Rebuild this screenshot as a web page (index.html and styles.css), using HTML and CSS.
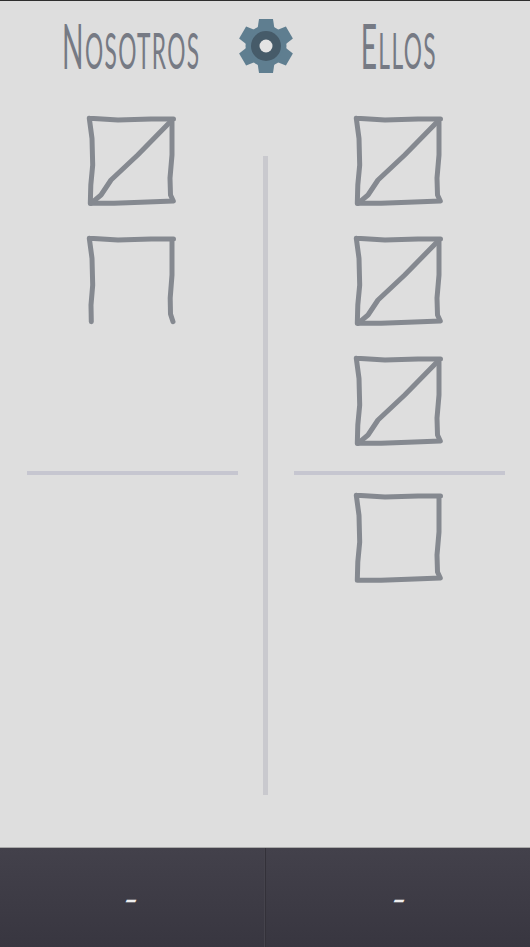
FILE: index.html
```html
<!DOCTYPE html>
<html>
	<head>
		<meta charset="UTF-8">
		<title>Truco</title>
		<link rel="stylesheet" href="styles.css">
	</head>
	<body>
		<svg class="defs" width="0" height="0">
			<symbol id="box" viewBox="0 0 92 92">
				<path d="M3.300 3.300L12 3.800 32 5 65 4 87.500 4M86 4L86 40 84 63 84.500 80 87.300 86 55 87.300 28 88.300 4.300 88.300M3.300 3.300L6 23.300 6.700 50 4.800 70 4.300 88.300"/>
			</symbol>
			<symbol id="open" viewBox="0 0 92 92">
				<path d="M3.300 3.300L12 3.800 32 5 65 4 87.500 4M86 4L86 40 84.200 63 84.500 79 87 86.700M3.300 3.300L6 23.300 6.700 50 5 70 5.300 86.700"/>
			</symbol>
			<symbol id="slash" viewBox="0 0 92 92">
				<path d="M86 5L51.700 40 25 65 15 80 5 88.300"/>
			</symbol>
		</svg>

		<header class="top">
			<div class="side"><h1 class="name">Nosotros</h1></div>
			<div class="mid">
				<svg class="gear" viewBox="0 0 54 54">
					<g class="teeth">
						<circle cx="27" cy="27" r="20.500"/>
						<polygon points="20,0 34,0 35.500,10 18.500,10"/>
						<polygon points="20,0 34,0 35.500,10 18.500,10" transform="rotate(60 27 27)"/>
						<polygon points="20,0 34,0 35.500,10 18.500,10" transform="rotate(120 27 27)"/>
						<polygon points="20,0 34,0 35.500,10 18.500,10" transform="rotate(180 27 27)"/>
						<polygon points="20,0 34,0 35.500,10 18.500,10" transform="rotate(240 27 27)"/>
						<polygon points="20,0 34,0 35.500,10 18.500,10" transform="rotate(300 27 27)"/>
					</g>
					<circle class="ring" cx="27" cy="27" r="15"/>
					<circle class="hole" cx="27" cy="27" r="6.500"/>
				</svg>
			</div>
			<div class="side side-right"><h1 class="name">Ellos</h1></div>
		</header>

		<main class="board">
			<section class="side">
				<div class="malas">
					<svg class="tally" viewBox="0 0 92 92"><use href="#box"/><use href="#slash"/></svg>
					<svg class="tally" viewBox="0 0 92 92"><use href="#open"/></svg>
				</div>
				<hr class="line">
				<div class="buenas"></div>
			</section>
			<div class="mid"><div class="rule"></div></div>
			<section class="side side-right">
				<div class="malas">
					<svg class="tally" viewBox="0 0 92 92"><use href="#box"/><use href="#slash"/></svg>
					<svg class="tally" viewBox="0 0 92 92"><use href="#box"/><use href="#slash"/></svg>
					<svg class="tally" viewBox="0 0 92 92"><use href="#box"/><use href="#slash"/></svg>
				</div>
				<hr class="line">
				<div class="buenas">
					<svg class="tally" viewBox="0 0 92 92"><use href="#box"/></svg>
				</div>
			</section>
		</main>

		<footer class="bar">
			<button class="minus"><span class="dash">-</span></button>
			<button class="minus"><span class="dash">-</span></button>
		</footer>
	</body>
</html>
```

FILE: styles.css
```css
html,body{
	height: 100%;
	width: 100%;
}
*{
	margin: 0;
	padding: 0;
	box-sizing: border-box;
}
body{
	display: flex;
	flex-direction: column;
	background: #dedede;
	border-top: 1px solid #2e2e2e;
	overflow: hidden;
	font-family: "Lato", "Liberation Sans", sans-serif;
}
.defs{
	position: absolute;
}
.top{
	display: flex;
	height: 114px;
}
.board{
	display: flex;
	height: 732px;
}
.side{
	width: 263px;
}
.side-right{
	width: 262px;
}
.mid{
	width: 5px;
	display: flex;
	justify-content: center;
}

/* titulos */
.top .side{
	display: flex;
	justify-content: center;
	padding-top: 14px;
}
.name{
	height: 60px;
	font-size: 50px;
	line-height: 60px;
	font-weight: 400;
	color: #767a84;
	text-transform: uppercase;
	letter-spacing: 3px;
	white-space: nowrap;
	transform: scaleX(.455);
}
.name::first-letter{
	font-size: 62px;
}
.gear{
	width: 54px;
	height: 54px;
	flex: none;
	margin-top: 18px;
}
.teeth{
	fill: #5f7e90;
}
.ring{
	fill: #465b69;
}
.hole{
	fill: #e4e4e4;
}

/* palitos */
.malas{
	height: 356px;
	display: flex;
	flex-direction: column;
	align-items: center;
	gap: 28px;
}
.buenas{
	margin-top: 17px;
	display: flex;
	flex-direction: column;
	align-items: center;
}
.tally{
	width: 92px;
	height: 92px;
	flex: none;
	fill: none;
	stroke: #858990;
	stroke-width: 5;
	stroke-linecap: round;
	stroke-linejoin: round;
}
.line{
	border: 0;
	height: 4px;
	background: #c6c6d0;
	margin: 0 25px 0 27px;
}
.side-right .line{
	margin: 0 25px 0 26px;
}
.rule{
	width: 5px;
	height: 639px;
	margin-top: 41px;
	flex: none;
	background: #c9c9ce;
}

/* botones */
.bar{
	display: flex;
	height: 100px;
	border-top: 1px solid #a9a9a9;
}
.minus{
	flex: 1 1 0;
	border: 0;
	border-right: 1px solid #333139;
	box-shadow: inset -1px 0 0 #45434c;
	background: linear-gradient(#43414b, #383640);
	color: #eee;
	font-family: "Liberation Sans", sans-serif;
	font-size: 30px;
	padding-top: 2px;
}
.minus:last-child{
	border-right: 0;
	box-shadow: none;
}
.dash{
	display: inline-block;
	transform: scaleX(1.300) skewX(-20deg);
}
.minus:last-child .dash{
	margin-left: 4px;
}
```
